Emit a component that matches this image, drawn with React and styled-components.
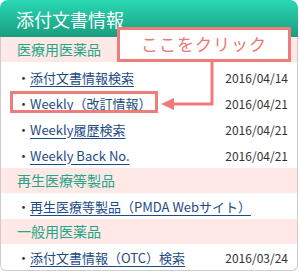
import React from "react";
import styled, { createGlobalStyle } from "styled-components";

const GlobalStyle = createGlobalStyle`
  body {
    margin: 0;
    background: #ffffff;
    font-family: "Noto Sans CJK JP", "Noto Sans", sans-serif;
  }
`;

const Wrapper = styled.div`
  position: relative;
  width: 298px;
`;

const Header = styled.div`
  height: 37px;
  box-sizing: border-box;
  padding: 6px 0 0 16px;
  border-radius: 8px 8px 0 0;
  background: linear-gradient(#29d8b4, #1a9d7f);
  color: #ffffff;
  font-size: 18px;
  line-height: 26px;
`;

const Body = styled.div`
  border: 1px solid #cccccc;
  border-top: none;
  border-radius: 0 0 6px 6px;
  overflow: hidden;
`;

const Category = styled.div`
  height: 25px;
  padding-left: 16px;
  background: #ffe8e6;
  color: #23a688;
  font-size: 14px;
  line-height: 25px;
`;

const List = styled.ul`
  margin: 0;
  padding: ${(p) => (p.$first ? "2px" : "0")} 0 0;
  list-style: none;
`;

const Row = styled.li`
  display: flex;
  align-items: center;
  height: 26px;
  padding: 0 9px 0 16px;
  font-size: 13px;
  color: #333333;
`;

const Dot = styled.span`
  width: 13px;
  text-align: center;
`;

const Link = styled.a`
  color: #1d4b85;
  text-decoration: underline;
  text-underline-offset: 3px;
  flex: 1;
  white-space: nowrap;
`;

const DateText = styled.span`
  font-size: 12px;
  color: #333333;
`;

const Callout = styled.div`
  position: absolute;
  left: 117px;
  top: 27px;
  width: 174px;
  height: 35px;
  box-sizing: border-box;
  border: 3px solid #ef7b7b;
  background: #ffffff;
  color: #ec7777;
  font-size: 17px;
  line-height: 28px;
  text-align: center;
  letter-spacing: 1px;
`;

const Highlight = styled.div`
  position: absolute;
  left: 10px;
  top: 91px;
  width: 148px;
  height: 22px;
  box-sizing: border-box;
  border: 3px solid #ef7b7b;
`;

const ArrowLayer = styled.svg`
  position: absolute;
  left: 0;
  top: 0;
  pointer-events: none;
`;

const sections = [
  {
    title: "医療用医薬品",
    items: [
      ["添付文書情報検索", "2016/04/14"],
      ["Weekly（改訂情報）", "2016/04/21"],
      ["Weekly履歴検索", "2016/04/21"],
      ["Weekly Back No.", "2016/04/21"],
    ],
  },
  {
    title: "再生医療等製品",
    items: [["再生医療等製品（PMDA Webサイト）", ""]],
  },
  {
    title: "一般用医薬品",
    items: [["添付文書情報（OTC）検索", "2016/03/24"]],
  },
];

function App() {
  return (
    <>
      <GlobalStyle />
      <Wrapper>
        <Header>添付文書情報</Header>
        <Body>
          {sections.map((s, i) => (
            <div key={s.title}>
              <Category>{s.title}</Category>
              <List $first={i === 0}>
                {s.items.map(([label, date]) => (
                  <Row key={label}>
                    <Dot>・</Dot>
                    <Link href="#">{label}</Link>
                    {date && <DateText>{date}</DateText>}
                  </Row>
                ))}
              </List>
            </div>
          ))}
        </Body>
        <Highlight />
        <ArrowLayer width="300" height="275">
          <polyline
            points="212,61 212,104 170,104"
            fill="none"
            stroke="#ef7b7b"
            strokeWidth="3"
          />
          <polygon points="161,104 174,98 174,110" fill="#ef7b7b" />
        </ArrowLayer>
        <Callout>ここをクリック</Callout>
      </Wrapper>
    </>
  );
}

export default App;
